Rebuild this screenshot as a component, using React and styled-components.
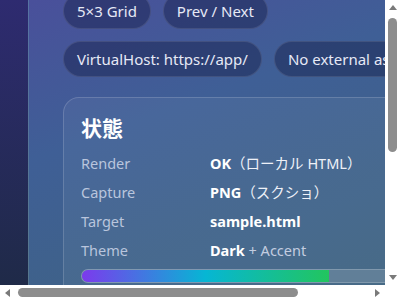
import styled, { createGlobalStyle } from "styled-components";

const GlobalStyle = createGlobalStyle`
  html, body {
    margin: 0;
    padding: 0;
    overflow: hidden;
  }

  body {
    font-family: "Noto Sans", "Noto Sans CJK JP", sans-serif;
    color: #e8ecf6;
  }
`;

const ARROW = "#7a7a7a";
const THUMB = "#8d8d8d";

// window frame: content area + scrollbars
const Frame = styled.div`
  width: 100vw;
  height: 100vh;
  display: grid;
  grid-template-columns: 1fr 15px;
  grid-template-rows: 1fr 15px;
  background: #ffffff;
`;

const Viewport = styled.div`
  overflow: hidden;
  background: linear-gradient(180deg, #2e2b70 0%, #1f2a48 100%);
`;

const ScrollV = styled.div`
  display: flex;
  flex-direction: column;
  background: #ffffff;
`;

const ScrollH = styled.div`
  display: flex;
  background: #ffffff;
`;

const ArrowBtn = styled.div`
  flex: 0 0 15px;
  width: 15px;
  height: 15px;
  display: flex;
  align-items: center;
  justify-content: center;

  &::before {
    content: "";
    width: 0;
    height: 0;
    ${({ $dir }) =>
      $dir === "up"
        ? `border-left: 4.5px solid transparent; border-right: 4.5px solid transparent; border-bottom: 5px solid ${ARROW};`
        : $dir === "down"
        ? `border-left: 4.5px solid transparent; border-right: 4.5px solid transparent; border-top: 5px solid ${ARROW};`
        : $dir === "left"
        ? `border-top: 4.5px solid transparent; border-bottom: 4.5px solid transparent; border-right: 5px solid ${ARROW};`
        : `border-top: 4.5px solid transparent; border-bottom: 4.5px solid transparent; border-left: 5px solid ${ARROW};`}
  }
`;

const Track = styled.div`
  flex: 1;
  display: flex;
  flex-direction: ${({ $vertical }) => ($vertical ? "column" : "row")};
  padding: 3px;
`;

const Thumb = styled.div`
  background: ${THUMB};
  border-radius: 999px;
  flex: 0 0 auto;
`;

const Page = styled.div`
  width: 446px;
  padding: 0 28px 28px;
  margin-top: -41px;
`;

const Panel = styled.section`
  border: 1px solid rgba(255, 255, 255, 0.12);
  border-radius: 20px;
  background: linear-gradient(160deg, #4c4c9c 0%, #3f5f96 35%, #3e6676 100%);
  padding: 33px 34px 34px;
`;

const Chips = styled.div`
  display: flex;
  flex-wrap: wrap;
  gap: 12px;
`;

const Chip = styled.span`
  display: inline-flex;
  align-items: center;
  height: 36px;
  box-sizing: border-box;
  padding: 0 13px;
  border-radius: 999px;
  border: 1px solid rgba(255, 255, 255, 0.1);
  background: rgba(20, 28, 70, 0.45);
  font-size: 15px;
  color: #e6e9f6;
  white-space: nowrap;
`;

const Card = styled.div`
  margin-top: 20px;
  border: 1px solid rgba(255, 255, 255, 0.16);
  border-radius: 16px;
  background: rgba(255, 255, 255, 0.05);
  padding: 16px 17px 18px;
`;

const Title = styled.h2`
  margin: 0 0 10px;
  font-size: 21px;
  line-height: 28px;
  font-weight: 700;
  color: #ffffff;
`;

const Rows = styled.dl`
  display: grid;
  grid-template-columns: 129px 1fr;
  row-gap: 7px;
  margin: 0;
`;

const Label = styled.dt`
  font-size: 14.5px;
  line-height: 22px;
  color: #b9c5dd;
`;

const Value = styled.dd`
  margin: 0;
  font-size: 14.5px;
  line-height: 22px;
  color: #eef1f8;

  b {
    font-weight: 700;
    color: #ffffff;
  }
`;

const Muted = styled.span`
  color: #c3cde0;
`;

const Bar = styled.div`
  margin-top: 8px;
  height: 12px;
  border-radius: 999px;
  border: 1px solid rgba(255, 255, 255, 0.2);
  background: rgba(255, 255, 255, 0.14);
  overflow: hidden;
`;

const Fill = styled.div`
  height: 100%;
  background: linear-gradient(90deg, #7c3aed 0%, #06b6d4 50%, #22c55e 100%);
`;

const Note = styled.p`
  margin: 14px 0 0;
  font-size: 13px;
  line-height: 20px;
  color: #b9c5dd;
`;

const rows = [
  { label: "Render", strong: "OK", rest: "（ローカル HTML）" },
  { label: "Capture", strong: "PNG", rest: "（スクショ）" },
  { label: "Target", strong: "sample.html", rest: "" },
  { label: "Theme", strong: "Dark", rest: " + Accent", muted: true },
];

export default function App() {
  const progress = 73;

  return (
    <>
      <GlobalStyle />
      <Frame>
        <Viewport>
          <Page>
            <Panel>
              <Chips>
                <Chip>5×3 Grid</Chip>
                <Chip>Prev / Next</Chip>
                <Chip>VirtualHost: https://app/</Chip>
                <Chip>No external assets</Chip>
              </Chips>

              <Card>
                <Title>状態</Title>
                <Rows>
                  {rows.map((r) => [
                    <Label key={r.label + "-l"}>{r.label}</Label>,
                    <Value key={r.label + "-v"}>
                      <b>{r.strong}</b>
                      {r.muted ? <Muted>{r.rest}</Muted> : r.rest}
                    </Value>,
                  ])}
                </Rows>
                <Bar>
                  <Fill style={{ width: `${progress}%` }} />
                </Bar>
                <Note>進捗 73% — ローカルで完結します。</Note>
              </Card>
            </Panel>
          </Page>
        </Viewport>

        <ScrollV>
          <ArrowBtn $dir="up" />
          <Track $vertical>
            <Thumb style={{ height: 134 }} />
          </Track>
          <ArrowBtn $dir="down" />
        </ScrollV>

        <ScrollH>
          <ArrowBtn $dir="left" />
          <Track>
            <Thumb style={{ width: 280 }} />
          </Track>
          <ArrowBtn $dir="right" />
        </ScrollH>
      </Frame>
    </>
  );
}
